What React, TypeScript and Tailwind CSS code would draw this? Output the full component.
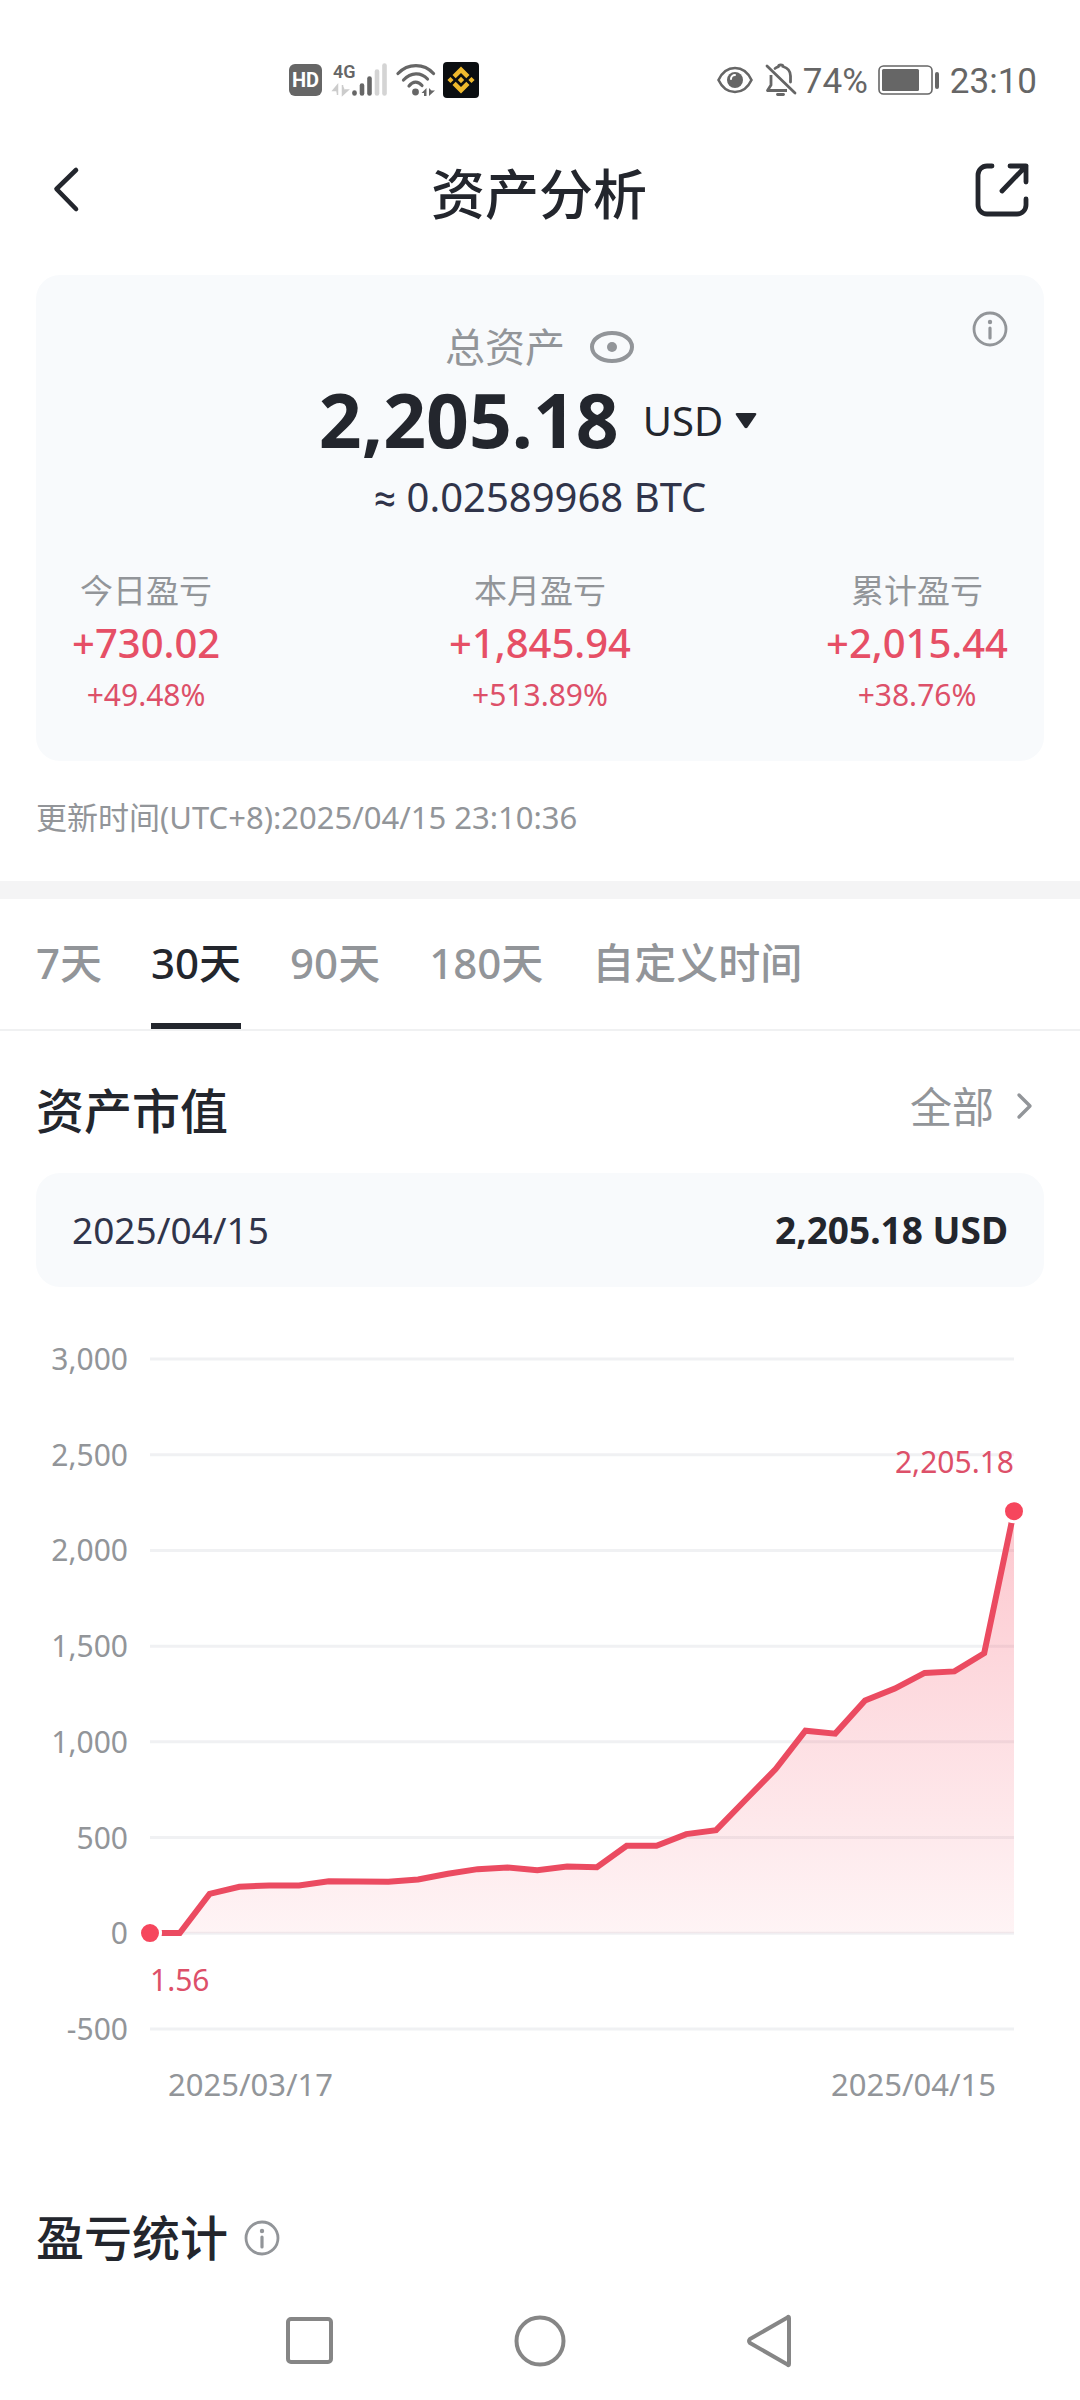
import React from "react";

const series = [
  [0, 1], [1, 1], [2, 206], [3, 243], [4, 250], [5, 250], [6, 272], [7, 271], [8, 269], [9, 281],
  [10, 311], [11, 335], [12, 344], [13, 330], [14, 349], [15, 345], [16, 457], [17, 457], [18, 518],
  [19, 539], [20, 699], [21, 858], [22, 1058], [23, 1043], [24, 1216], [25, 1278], [26, 1360],
  [27, 1368], [28, 1463], [29, 2205],
];

const ticks = ["3,000", "2,500", "2,000", "1,500", "1,000", "500", "0", "-500"];

const stats = [
  { label: "今日盈亏", value: "+730.02", pct: "+49.48%" },
  { label: "本月盈亏", value: "+1,845.94", pct: "+513.89%" },
  { label: "累计盈亏", value: "+2,015.44", pct: "+38.76%" },
];

const ranges = ["7天", "30天", "90天", "180天", "自定义时间"];

const W = 864;
const H = 670;
const px = (i: number) => (i * W) / 29;
const py = (v: number) => ((3000 - v) * H) / 3500;

function InfoIcon() {
  return (
    <svg viewBox="0 0 36 36" className="size-9" fill="none" aria-hidden="true">
      <circle cx="18" cy="18" r="16" stroke="#929599" strokeWidth="2.8" />
      <circle cx="18" cy="11" r="2.2" fill="#929599" />
      <path d="M18 17v10" stroke="#929599" strokeWidth="3.2" strokeLinecap="round" />
    </svg>
  );
}

function StatusBar() {
  return (
    <div className="flex h-40 items-center justify-between pr-[43px] pl-[289px] text-[#666]">
      <div className="flex items-center">
        <span className="flex h-8 w-[33px] items-center justify-center rounded-md bg-[#666] font-[Roboto] text-xl font-bold text-white">
          HD
        </span>
        <svg viewBox="0 0 54 34" className="ml-[11px] h-[34px] w-[54px] overflow-visible" aria-label="4G">
          <text x="0" y="15" fontFamily="Roboto" fontSize="18" fontWeight="600" fill="#666">4G</text>
          <path d="M4.500 32V22L0 27.500H3M9.500 22V32L15 27H12" fill="#ccc" stroke="#ccc" strokeWidth="1.500" />
          <g strokeWidth="4.600" strokeLinecap="round">
            <path d="M21.500 29.500v1" stroke="#666" />
            <path d="M29 22.500v8" stroke="#666" />
            <path d="M36.500 15.500v15" stroke="#666" />
            <path d="M44 8.500v22" stroke="#d4d4d4" />
            <path d="M51.500 2.500v28" stroke="#d4d4d4" />
          </g>
        </svg>
        <svg viewBox="0 0 40 34" className="ml-[9px] h-[34px] w-10" fill="none" aria-hidden="true">
          <g stroke="#666" strokeWidth="3.200" strokeLinecap="round">
            <path d="M2 10.500C12 0 28 0 37.500 10.500" />
            <path d="M7.500 17C15 9 25 9 31.500 16" />
            <path d="M13 23C17 18 22 18 26 22.500" />
          </g>
          <circle cx="19.500" cy="29" r="3.400" fill="#666" />
          <path d="M30.500 25v8h-2.500v-3h-2.500zM33 25v8l6-5.500h-3.500z" fill="#666" />
        </svg>
        <svg viewBox="0 0 36 36" className="ml-[7px] size-9" aria-hidden="true">
          <rect width="36" height="36" rx="4" fill="#0b0e11" />
          <g fill="#efb92d">
            <path d="M18 4.500l8.500 8.500-3.200 3.200L18 10.900l-5.300 5.300L9.500 13z" />
            <path d="M18 31.500L9.500 23l3.200-3.200 5.300 5.300 5.300-5.300 3.200 3.200z" />
            <path d="M18 14.800l3.200 3.200-3.200 3.200-3.200-3.200zM7.500 14.900l3.100 3.100-3.100 3.100L4.400 18zM28.500 14.900l3.100 3.100-3.100 3.100-3.100-3.100z" />
          </g>
        </svg>
      </div>
      <div className="flex items-center">
        <svg viewBox="0 0 36 28" className="h-7 w-9" fill="none" aria-hidden="true">
          <path d="M1.500 14C9-2 27-2 34.500 14 27 30 9 30 1.500 14z" stroke="#666" strokeWidth="2.600" />
          <circle cx="18" cy="14" r="8" fill="#666" />
          <path d="M14 13a4 4 0 014-4" stroke="#fff" strokeWidth="2" strokeLinecap="round" />
        </svg>
        <svg viewBox="0 0 32 34" className="ml-3 h-[34px] w-8" fill="none" stroke="#666" strokeWidth="2.800" aria-hidden="true">
          <path d="M2 3l28 27" strokeLinecap="round" />
          <path d="M6 12v10l-3.500 5.500H22" strokeLinejoin="round" />
          <path d="M10 5.500C12 4 13 4 13.500 3.500c0-2 4.500-2 4.500 0 5 1.500 7.500 5 7.500 9.500v6" strokeLinecap="round" />
          <path d="M12.500 31.500h6" strokeLinecap="round" />
        </svg>
        <span className="ml-1.5 pt-1 font-[Roboto] text-[35px]">74%</span>
        <svg viewBox="0 0 62 30" className="ml-2.5 h-[30px] w-[62px]" aria-hidden="true">
          <rect x="1" y="1" width="53" height="28" rx="4.500" fill="none" stroke="#666" strokeWidth="1.600" />
          <rect x="4" y="4" width="37" height="22" rx="1.500" fill="#666" />
          <rect x="57" y="7" width="4" height="17" rx="2" fill="#666" />
        </svg>
        <span className="ml-2.5 pt-1 font-[Roboto] text-[35px]">23:10</span>
      </div>
    </div>
  );
}

function Chart() {
  const pts = series.map(([i, v]) => `${px(i)},${py(v)}`);
  const line = `M${pts.join("L")}`;
  return (
    <div className="mt-[72px] flex pr-[66px] pl-9">
      <div className="-my-5 flex w-[92px] flex-col justify-between text-right text-[30px] leading-10 text-[#929599]">
        {ticks.map((t) => (
          <span key={t}>{t}</span>
        ))}
      </div>
      <div className="relative ml-[22px] min-w-0 flex-1">
        <svg viewBox={`0 0 ${W} ${H}`} className="block h-auto w-full overflow-visible" fill="none" role="img" aria-label="资产市值">
          <defs>
            <linearGradient id="area" x1="0" y1="0" x2="0" y2="1">
              <stop offset="0" stopColor="#f6465d" stopOpacity="0.3" />
              <stop offset="1" stopColor="#f6465d" stopOpacity="0.06" />
            </linearGradient>
          </defs>
          {ticks.map((t, i) => (
            <path key={t} d={`M0 ${(i * H) / 7}H${W}`} stroke="#f0f1f3" strokeWidth="3" />
          ))}
          <path d={`${line}L${W},${py(0)}L0,${py(0)}Z`} fill="url(#area)" />
          <path d={line} stroke="#eb4b61" strokeWidth="6" />
          <circle cx={px(0)} cy={py(1)} r="10.500" fill="#f6465d" stroke="#fff" strokeWidth="3" />
          <circle cx={px(29)} cy={py(2205)} r="10.500" fill="#f6465d" stroke="#fff" strokeWidth="3" />
        </svg>
        <span className="absolute top-[12.4%] right-0 text-[30px] leading-10 text-[#dd5069]">2,205.18</span>
        <span className="absolute bottom-[4.4%] left-0 text-[30px] leading-10 text-[#dd5069]">1.56</span>
      </div>
    </div>
  );
}

export default function App() {
  return (
    <div className="min-h-screen bg-white font-['Noto_Sans','Noto_Sans_CJK_SC',sans-serif] text-[#23262d]">
      <StatusBar />
      <header className="flex h-15 items-center justify-between pr-[50px] pl-12">
        <button aria-label="返回" className="w-14">
          <svg viewBox="0 0 36 48" className="h-12 w-9" fill="none" stroke="#23262d" strokeWidth="4.600" strokeLinecap="round" strokeLinejoin="round">
            <path d="M28 4L8.500 23 28 43" />
          </svg>
        </button>
        <h1 className="pt-2 text-[54px] leading-15 font-medium">资产分析</h1>
        <button aria-label="分享" className="w-14">
          <svg viewBox="0 0 56 56" className="size-14" fill="none" stroke="#23262d" strokeWidth="4.800" strokeLinecap="round" strokeLinejoin="round">
            <path d="M18 4H13a9 9 0 00-9 9v30a9 9 0 009 9h30a9 9 0 009-9v-6" />
            <path d="M36 4h16v16M52 4L28 29" />
          </svg>
        </button>
      </header>

      <main>
        <section className="relative mx-9 mt-[55px] rounded-3xl bg-[#f8fafc] px-9 pt-12 pb-[42px]">
          <button aria-label="说明" className="absolute top-9 right-9">
            <InfoIcon />
          </button>
          <div className="flex h-12 items-center justify-center text-[#929599]">
            <span className="text-[40px] leading-12">总资产</span>
            <button aria-label="隐藏金额" className="ml-6">
              <svg viewBox="0 0 46 34" className="h-[34px] w-[46px]" fill="none">
                <path d="M3 17C3 9 12 3 23 3s20 6 20 14-9 14-20 14S3 25 3 17z" stroke="#929599" strokeWidth="4" />
                <circle cx="23" cy="17" r="5" fill="#929599" />
              </svg>
            </button>
          </div>
          <div className="flex h-24 items-center justify-center pr-1">
            <span className="text-[75px] leading-24 font-bold">2,205.18</span>
            <button className="ml-6 flex items-center pt-1 text-[40px] leading-12">
              USD
              <svg viewBox="0 0 22 16" className="ml-3 h-4 w-[22px]" fill="currentColor" aria-hidden="true">
                <path d="M2 0h18q2 0 1 2l-8.500 12.500q-1.500 1.500-3 0L1 2q-1-2 1-2z" />
              </svg>
            </button>
          </div>
          <p className="text-center text-[40px] leading-15 text-[#30344a]">
            <span className="font-[Roboto]">≈</span> 0.02589968 BTC
          </p>
          <dl className="mt-[38px] grid grid-cols-[1fr_auto_1fr] text-center">
            {stats.map((s) => (
              <div key={s.label} className="first:justify-self-start last:justify-self-end">
                <dt className="text-[33px] leading-12 text-[#929599]">{s.label}</dt>
                <dd className="text-[40px] leading-14 font-medium text-[#e64f66]">{s.value}</dd>
                <dd className="text-[30px] leading-12 text-[#dd5069]">{s.pct}</dd>
              </div>
            ))}
          </dl>
        </section>
        <p className="mt-8 mb-10 px-9 text-[31px] leading-12 text-[#929599]">
          更新时间(UTC+8):2025/04/15 23:10:36
        </p>

        <div className="h-[18px] bg-[#f4f4f5]" />
        <div role="tablist" className="flex gap-[49px] border-b-2 border-[#f0f1f2] px-9 text-[42px] leading-15">
          {ranges.map((r) => (
            <button
              key={r}
              role="tab"
              aria-selected={r === "30天"}
              className={
                r === "30天"
                  ? "border-b-6 border-[#23262d] pt-[34px] pb-[30px] font-medium text-[#23262d]"
                  : "border-b-6 border-transparent pt-[34px] pb-[30px] font-medium text-[#929599]"
              }
            >
              {r}
            </button>
          ))}
        </div>

        <div className="mt-12 flex h-16 items-start justify-between pr-[44px] pl-9">
          <h2 className="text-[48px] leading-16 font-medium">资产市值</h2>
          <button className="flex items-center text-[42px] leading-14 text-[#929599]">
            全部
            <svg viewBox="0 0 22 32" className="ml-5 h-8 w-[22px]" fill="none" stroke="#929599" strokeWidth="3.400" strokeLinecap="round" strokeLinejoin="round" aria-hidden="true">
              <path d="M5 4l11 11L5 26" />
            </svg>
          </button>
        </div>
        <div className="mx-9 mt-[30px] flex items-center justify-between rounded-3xl bg-[#f8fafc] px-9 py-[29px] text-[37px] leading-14">
          <span className="text-[#30344a]">2025/04/15</span>
          <span className="font-bold">2,205.18 USD</span>
        </div>

        <Chart />
        <div className="mt-[31px] flex justify-between pr-[84px] pl-[168px] text-[31px] leading-12 text-[#929599]">
          <span>2025/03/17</span>
          <span>2025/04/15</span>
        </div>

        <div className="mt-[98px] flex h-16 items-center px-9">
          <h2 className="text-[48px] leading-16 font-medium">盈亏统计</h2>
          <button aria-label="盈亏统计说明" className="ml-4">
            <InfoIcon />
          </button>
        </div>
      </main>

      <nav className="mx-auto mt-[43px] grid w-[64%] grid-cols-3 place-items-center pb-[31px]">
        <button aria-label="最近任务">
          <svg viewBox="0 0 56 56" className="size-14" fill="none" stroke="#868686" strokeWidth="4">
            <rect x="6" y="6" width="43" height="43" rx="3" />
          </svg>
        </button>
        <button aria-label="主屏幕">
          <svg viewBox="0 0 56 56" className="size-14" fill="none" stroke="#868686" strokeWidth="4">
            <circle cx="28" cy="28" r="23.500" />
          </svg>
        </button>
        <button aria-label="系统返回">
          <svg viewBox="0 0 56 56" className="size-14" fill="none" stroke="#868686" strokeWidth="4" strokeLinejoin="round">
            <path d="M47 5v46q0 2-1.500.5L8 30q-2-2 0-4L45.500 4.500Q47 3 47 5z" />
          </svg>
        </button>
      </nav>
    </div>
  );
}
